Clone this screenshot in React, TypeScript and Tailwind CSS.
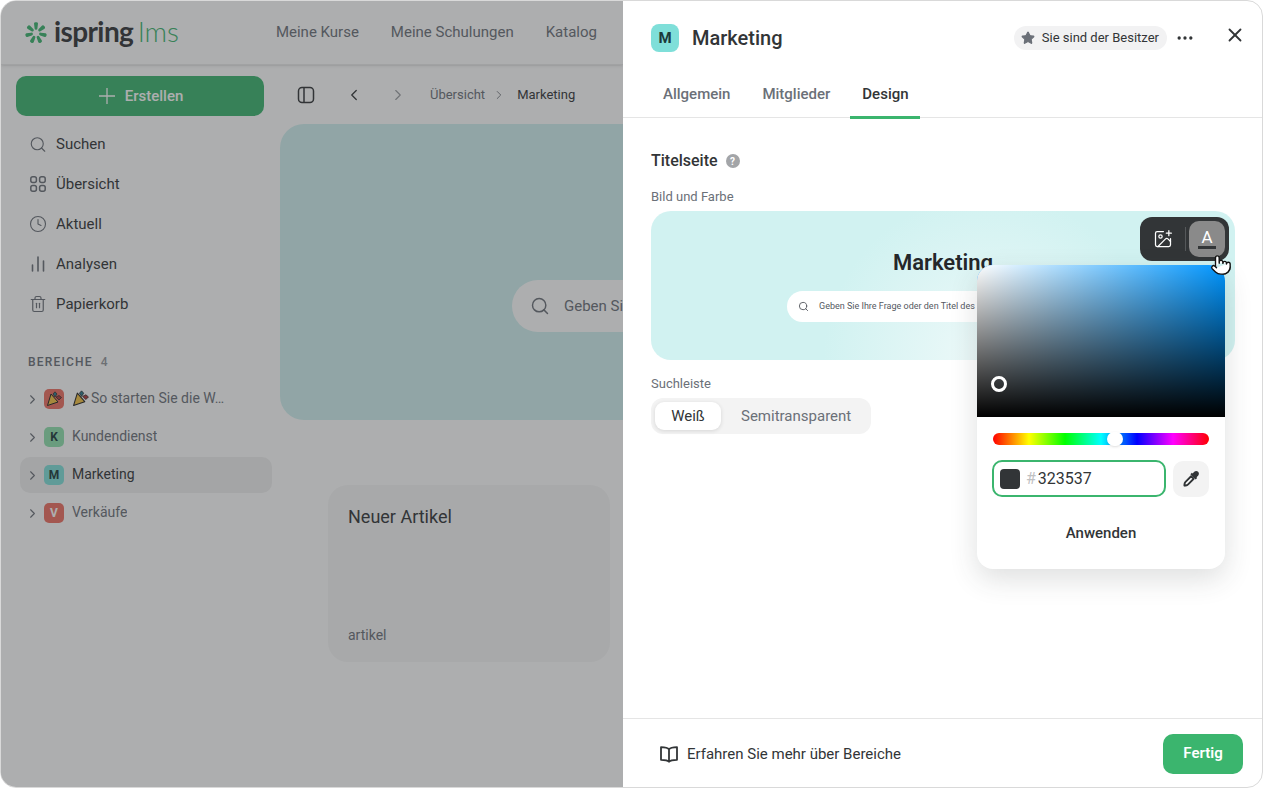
import React from "react";
import { Search, Clock, Trash2, ChevronRight, ChevronLeft, X, Star, Ellipsis, ImagePlus, Pointer } from "lucide-react";

const Tile = ({ c, t, big }: { c: string; t: string; big?: boolean }) => (
  <span className={`flex shrink-0 items-center justify-center font-bold text-[#1c3a3a] ${c} ${big ? "h-7 w-7 rounded-lg text-[15px]" : "h-5 w-5 rounded-[5px] text-[12px]"}`}>{t}</span>
);

const Popper = ({ s = 16 }: { s?: number }) => (
  <svg width={s} height={s} viewBox="0 0 16 16" className="shrink-0">
    <path d="M5 3 L1.5 14.5 L12 11 Z" fill="#f5c242" stroke="#222" strokeWidth="1" strokeLinejoin="round" />
    <path d="M7 3 L9 .8 L11 3 L9 6 Z" fill="#2c7a8c" stroke="#222" strokeWidth=".7" />
    <path d="M10 6 L13 4.5 L15.5 6.5 L13 9 Z" fill="#b33a3a" stroke="#222" strokeWidth=".7" />
  </svg>
);

const GridIcon = () => (
  <svg width="16" height="16" viewBox="0 0 16 16" fill="none" stroke="currentColor" strokeWidth="1.5">
    <rect x=".8" y=".8" width="5.6" height="5.6" rx="2" /><rect x="9.6" y=".8" width="5.6" height="5.6" rx="2" />
    <rect x=".8" y="9.6" width="5.6" height="5.6" rx="2" /><rect x="9.6" y="9.6" width="5.6" height="5.6" rx="2" />
  </svg>
);
const BarsIcon = () => (
  <svg width="18" height="18" viewBox="0 0 18 18" fill="none" stroke="currentColor" strokeWidth="1.6" strokeLinecap="round">
    <path d="M3.5 10V16M9 2V16M14.5 6V16" />
  </svg>
);
const PanelIcon = () => (
  <svg width="18" height="18" viewBox="0 0 18 18" fill="none" stroke="currentColor" strokeWidth="1.5">
    <rect x="1.5" y="1.5" width="15" height="15" rx="3.5" /><path d="M7 1.5V16.5" />
  </svg>
);
const BookIcon = () => (
  <svg width="20" height="20" viewBox="0 0 20 20" fill="none" stroke="#323537" strokeWidth="1.8" strokeLinejoin="round">
    <path d="M10 5.5C8.8 3.8 7 3.2 2 3.2V15.8C7 15.8 8.8 16.2 10 17.8C11.2 16.2 13 15.8 18 15.8V3.2C13 3.2 11.2 3.8 10 5.5ZM10 5.5V17.8" />
  </svg>
);
const DropperIcon = () => (
  <svg width="17" height="17" viewBox="0 0 18 18">
    <path d="M10.2 3.6L11.9 1.9C13 .8 14.8.6 16 1.9C17.3 3.2 17 5 16 6L14.3 7.7L15 8.5L13.4 10.1L7.8 4.5L9.4 2.9Z" fill="#323537" />
    <path d="M8.6 6.6L11.3 9.3L5.4 15.2C4.6 16 3.7 16.3 3 16.4L1.5 16.6L1.6 15C1.7 14.2 2 13.3 2.7 12.5Z" fill="#fff" stroke="#323537" strokeWidth="2" strokeLinejoin="round" />
  </svg>
);
const Logo = () => (
  <svg width="22" height="22" viewBox="0 0 22 22" className="shrink-0">
    {[0, 51.4, 102.8, 154.3, 205.7, 257.1, 308.6].map((a) => (
      <path key={a} d="M9 1.6a1.6 1.6 0 0 1 1.6-1.4h.8a1.6 1.6 0 0 1 1.6 1.4L12.4 6.4a1.4 1.4 0 0 1-2.8 0Z" fill="#3bb56e" transform={`rotate(${a} 11 11)`} />
    ))}
  </svg>
);

const nav: [React.ReactNode, string][] = [
  [<Search size={21} strokeWidth={1.5} />, "Suchen"],
  [<GridIcon />, "Übersicht"],
  [<Clock size={22} strokeWidth={1.5} />, "Aktuell"],
  [<BarsIcon />, "Analysen"],
  [<Trash2 size={20} strokeWidth={1.6} />, "Papierkorb"],
];

const Space = ({ icon, label, active }: { icon: React.ReactNode; label: React.ReactNode; active?: boolean }) => (
  <div className={`flex h-9 w-[252px] items-center rounded-[10px] pl-[5px] text-[14px] ${active ? "bg-[#f1f1f1] text-[#323537]" : "text-[#6b7078]"}`}>
    <ChevronRight size={15} strokeWidth={1.75} className="mr-[4px] text-[#6b7078]" />
    {icon}
    <span className="mb-px ml-2 flex items-center truncate">{label}</span>
  </div>
);

export default function App() {
  return (
    <div className="relative flex h-[788px] w-[1263px] overflow-hidden rounded-[16px] border border-[#d9d9d9] bg-white font-['Roboto',sans-serif] text-[#323537]">
      {/* Dimmed page */}
      <div className="relative flex h-full w-[622px] shrink-0 flex-col overflow-hidden">
        <header className="flex h-[64px] shrink-0 items-center border-b border-[#ececec] pl-[24px] shadow-sm">
          <Logo />
          <span className="mb-[4px] ml-[7px] font-['Lato',sans-serif] text-[28px] font-bold tracking-[-0.6px] text-[#323537]">ispring</span>
          <span className="mb-[4px] ml-[5px] font-['Lato',sans-serif] text-[28px] font-light text-[#3bb56e]">lms</span>
          <nav className="ml-[97px] flex gap-8 whitespace-nowrap text-[15px] text-[#6b7078]">
            <span>Meine Kurse</span><span>Meine Schulungen</span><span>Katalog</span>
          </nav>
        </header>
        <div className="flex min-h-0 flex-1">
          <aside className="flex w-[279px] shrink-0 flex-col pl-[15px] pt-[11px]">
            <button className="flex h-10 w-[248px] items-center justify-center gap-[10px] rounded-[10px] bg-[#3bb56e] pl-[2px] text-[15px] font-medium text-white">
              <svg width="16" height="16" viewBox="0 0 16 16" stroke="currentColor" strokeWidth="1.3"><path d="M8 0V16M0 8H16" /></svg>Erstellen
            </button>
            <div className="mt-2 flex flex-col">
              {nav.map(([i, t]) => (
                <div key={t} className="flex h-10 items-center gap-[9px] pl-[13px] text-[15px]">
                  <span className="flex w-[18px] justify-center text-[#6b7078]">{i}</span>{t}
                </div>
              ))}
            </div>
            <div className="mb-[10px] ml-[12px] mt-[29px] flex h-[18px] items-center gap-2 text-[12px] font-medium tracking-[1.2px] text-[#6b7078]">BEREICHE <span className="text-[#94979c]">4</span></div>
            <div className="flex flex-col gap-[2px] pl-[4px]">
              <Space icon={<span className="flex h-5 w-5 items-center justify-center rounded-[5px] bg-[#ee6f62]"><Popper /></span>} label={<><span className="mr-[2px]"><Popper s={17} /></span>So starten Sie die W…</>} />
              <Space icon={<Tile c="bg-[#8fe2ae]" t="K" />} label="Kundendienst" />
              <Space active icon={<Tile c="bg-[#7fdfd9]" t="M" />} label="Marketing" />
              <Space icon={<span className="flex h-5 w-5 items-center justify-center rounded-[5px] bg-[#ee6f62] text-[12px] font-bold text-white">V</span>} label="Verkäufe" />
            </div>
          </aside>
          <main className="min-w-0 flex-1">
            <div className="flex h-[59px] items-center pl-[17px] text-[#323537]">
              <PanelIcon />
              <ChevronLeft size={18} strokeWidth={1.75} className="ml-[30px]" />
              <ChevronRight size={18} strokeWidth={1.5} className="ml-[26px] text-[#9a9da1]" />
              <span className="ml-[23px] text-[13px] text-[#6b7078]">Übersicht</span>
              <ChevronRight size={14} strokeWidth={1.5} className="ml-[7px] mr-[11px] text-[#6b7078]" />
              <span className="text-[13px]">Marketing</span>
            </div>
            <div className="flex h-[296px] w-[500px] items-start rounded-l-[24px] bg-[#d0f1f0] pl-[232px] pt-[156px]">
              <div className="flex h-[52px] w-[300px] shrink-0 items-center gap-[14px] rounded-full bg-white pl-[18px] text-[15px] text-[#6b7078]">
                <Search size={20} strokeWidth={1.75} />Geben Sie
              </div>
            </div>
            <div className="ml-[48px] mt-[65px] flex h-[177px] w-[282px] flex-col justify-between rounded-[20px] bg-[#f7f7f7] px-5 pb-[16px] pt-[18px]">
              <span className="text-[18px]">Neuer Artikel</span>
              <span className="text-[14px] text-[#6b7078]">artikel</span>
            </div>
          </main>
        </div>
        <div className="absolute inset-0 bg-[#323537]/40" />
      </div>

      {/* Right panel */}
      <section className="relative flex h-full min-w-0 flex-1 flex-col">
        <div className="flex h-[74px] shrink-0 items-start pl-[28px] pr-[16px] pt-[23px]">
          <Tile big c="bg-[#7fdfd9]" t="M" />
          <h1 className="ml-[13px] text-[20px] font-medium leading-7">Marketing</h1>
          <div className="ml-auto mt-[2px] flex h-6 items-center gap-[7px] rounded-full bg-[#f2f2f3] pl-[7px] pr-2 text-[13px]">
            <Star size={14} fill="#6b7078" stroke="#6b7078" />Sie sind der Besitzer
          </div>
          <Ellipsis size={20} className="ml-[8px] mt-[4px]" />
          <X size={22} strokeWidth={2} className="ml-[29px]" />
        </div>
        <div className="flex h-[43px] shrink-0 items-start gap-0 border-b border-[#e5e5e5] pl-[27px] text-[15px] font-medium text-[#6b7078]">
          <span className="flex h-[43px] items-center px-[13px] pb-[5px]">Allgemein</span>
          <span className="ml-[6px] flex h-[43px] items-center px-[13px] pb-[5px]">Mitglieder</span>
          <span className="ml-[7px] flex h-[44px] items-center border-b-[3px] border-[#3bb56e] pl-[12px] pr-[11px] pb-[2px] text-[#323537]">Design</span>
        </div>
        <div className="flex-1 px-[28px] pt-[33px]">
          <div className="flex h-[20px] items-center gap-[8px] text-[16px] font-medium">
            Titelseite
            <span className="flex h-[14px] w-[14px] items-center justify-center rounded-full bg-[#a3a5a8] text-[10px] font-bold text-white">?</span>
          </div>
          <div className="mt-[17px] text-[13px] leading-[18px] text-[#6b7078]">Bild und Farbe</div>
          <div className="mt-[5px] flex h-[149px] w-[584px] flex-col items-center rounded-[20px] bg-[#d1f2f1] bg-[radial-gradient(circle_at_58%_100%,#eef9f9,#d1f2f1_45%)] pt-[36px]">
            <div className="text-[22px] font-semibold leading-[32px] text-[#24272a]">Marketing</div>
            <div className="mt-[12px] flex h-[31px] w-[312px] items-center gap-[10px] rounded-full bg-white pl-[11px] text-[9px] text-[#55595f]">
              <Search size={11} strokeWidth={2} />Geben Sie Ihre Frage oder den Titel des
            </div>
          </div>
          <div className="mt-[15px] text-[13px] leading-[18px] text-[#6b7078]">Suchleiste</div>
          <div className="mt-[5px] flex h-9 w-[220px] items-center rounded-[12px] bg-[#f3f3f3] p-1 text-[15px] text-[#6b7078]">
            <span className="flex h-7 w-[66px] items-center justify-center rounded-[9px] bg-white text-[#323537] shadow-[0_1px_4px_rgba(0,0,0,0.12)]">Weiß</span>
            <span className="ml-5">Semitransparent</span>
          </div>
        </div>
        <div className="flex h-[69px] shrink-0 items-center border-t border-[#e5e5e5] pl-[36px] pr-[19px] pt-px">
          <BookIcon />
          <span className="ml-[8px] mt-px text-[15px]">Erfahren Sie mehr über Bereiche</span>
          <button className="ml-auto h-10 w-20 rounded-[10px] bg-[#3bb56e] text-[15px] font-semibold text-white">Fertig</button>
        </div>

        {/* Image toolbar */}
        <div className="absolute left-[517px] top-[216px] flex h-11 w-[89px] items-center rounded-[12px] bg-[#323537] pl-[13px] text-white">
          <ImagePlus size={20} strokeWidth={1.5} />
          <span className="ml-[12px] h-6 w-px bg-[#55585a]" />
          <span className="ml-[3px] flex h-9 w-9 flex-col items-center justify-center rounded-[10px] bg-[#8a8a8a] pt-px text-[17px] leading-[14px]">
            A<span className="mt-[2px] h-[3px] w-[18px] bg-[#323537]" />
          </span>
        </div>

        {/* Colour picker */}
        <div className="absolute left-[354px] top-[264px] w-[248px] overflow-hidden rounded-[16px] bg-white shadow-[0_10px_28px_rgba(50,53,55,0.16)]">
          <div className="relative h-[152px] bg-[#0096ff] bg-[linear-gradient(to_top,#000,transparent),linear-gradient(to_right,#fff,transparent)]">
            <span className="absolute bottom-[25px] left-[14px] h-4 w-4 rounded-full border-[3px] border-white" />
          </div>
          <div className="relative mx-4 mt-4 h-3 rounded-full bg-[linear-gradient(to_right,#f00,#ff0,#0f0,#0ff,#00f,#f0f,#f00)]">
            <span className="absolute -top-px left-[114px] h-[14px] w-4 rounded-full bg-white shadow-sm" />
          </div>
          <div className="mx-[15px] mt-[15px] flex items-center justify-between">
            <div className="flex h-[37px] w-[174px] items-center rounded-[10px] border-2 border-[#3bb56e] pl-[6px] text-[16px]">
              <span className="h-5 w-5 rounded-[4px] bg-[#323537]" />
              <span className="ml-[6px] text-[#bfc1c3]">#</span>
              <span className="ml-[2px]">323537</span>
            </div>
            <span className="mr-px flex h-9 w-9 items-center justify-center rounded-[10px] bg-[#f3f3f3]">
              <DropperIcon />
            </span>
          </div>
          <div className="flex h-[72px] items-center justify-center text-[15px] font-medium">Anwenden</div>
        </div>

        {/* Cursor */}
        <Pointer size={22} fill="#fff" stroke="#111" strokeWidth={1.5} className="absolute left-[587px] top-[253px] z-10" />
      </section>
    </div>
  );
}
